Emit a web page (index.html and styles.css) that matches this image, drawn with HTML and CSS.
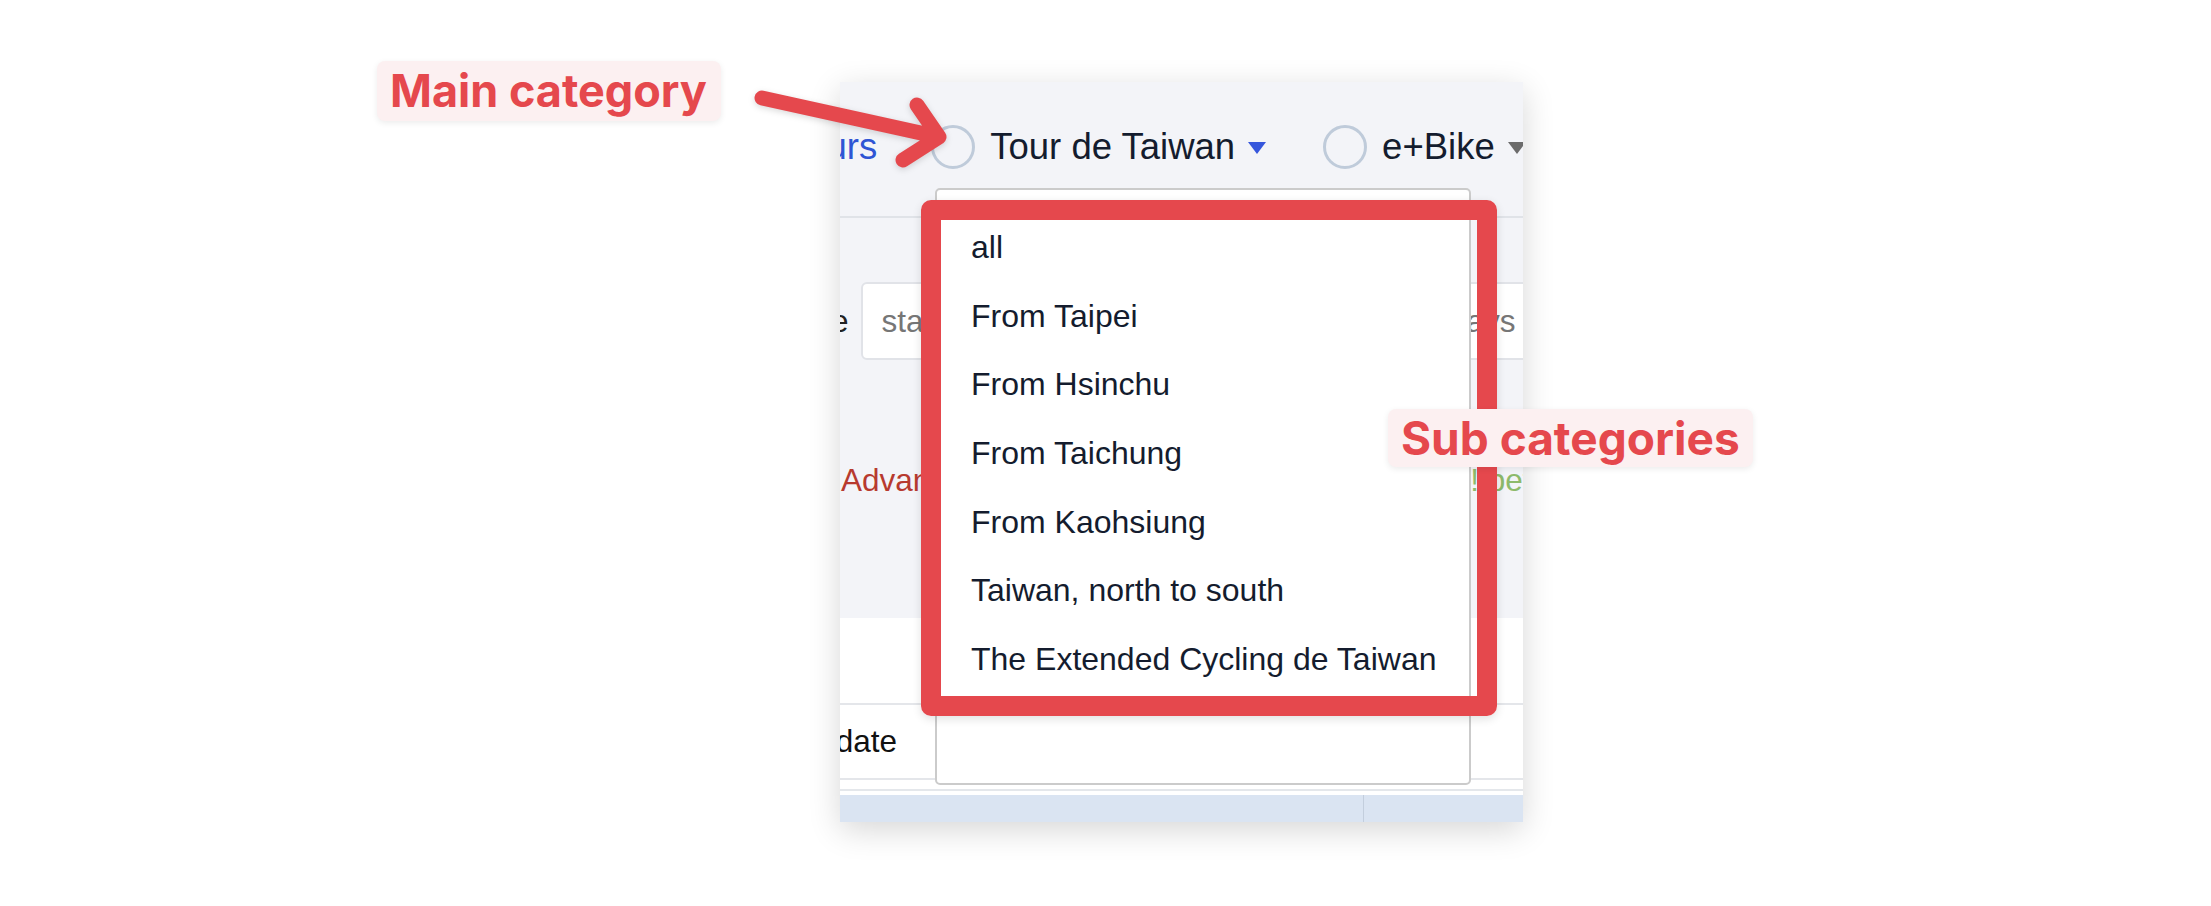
FILE: index.html
```html
<!DOCTYPE html>
<html lang="en">
<head>
    <meta charset="UTF-8">
    <meta name="viewport" content="width=device-width, initial-scale=1.0">
    <title>Category filter</title>
    <link rel="stylesheet" href="styles.css">
</head>
<body>
    <div class="stage">
        <div class="panel">
            <div class="panel-top">
                <nav class="cat-nav">
                    <a href="#" class="nav-link">Tours</a>
                    <div class="cat">
                        <span class="radio"></span>
                        <span class="cat-name">Tour de Taiwan</span>
                        <span class="caret caret-blue"></span>
                    </div>
                    <div class="cat">
                        <span class="radio"></span>
                        <span class="cat-name">e+Bike</span>
                        <span class="caret"></span>
                    </div>
                </nav>

                <div class="search-row">
                    <label class="search-label">Date</label>
                    <input type="text" class="field field-start" placeholder="start date">
                    <input type="text" class="field field-days" placeholder="days">
                </div>

                <div class="adv-row">
                    <a href="#" class="adv-link">Advanced search</a>
                    <span class="beta">New! beta</span>
                </div>
            </div>

            <div class="table-row">
                <div class="cell-label">Start date</div>
            </div>

            <div class="footer-bar">
                <div class="strip"><span class="strip-sep"></span></div>
            </div>

            <!-- open dropdown of the main category -->
            <div class="dropdown">
                <ul class="sub-list">
                    <li>all</li>
                    <li>From Taipei</li>
                    <li>From Hsinchu</li>
                    <li>From Taichung</li>
                    <li>From Kaohsiung</li>
                    <li>Taiwan, north to south</li>
                    <li>The Extended Cycling de Taiwan</li>
                </ul>
            </div>
        </div>

        <!-- annotations -->
        <div class="note note-main">Main category</div>
        <svg class="arrow" width="220" height="100" viewBox="0 0 220 100">
            <path d="M22 18 L199 57 M177 25 L199 57 L163 80" fill="none" stroke="#e5484d" stroke-width="15" stroke-linecap="round" stroke-linejoin="round"/>
        </svg>
        <div class="highlight"></div>
        <div class="note note-sub">Sub categories</div>
    </div>
</body>
</html>
```

FILE: styles.css
```css
:root {
    --note-red: #e5484d;
    --note-bg: #fcf0f1;
    --panel-gray: #f3f4f8;
    --text-dark: #141c2e;
}

* {
    margin: 0;
    padding: 0;
    box-sizing: border-box;
}

body {
    background-color: #fff;
    font-family: 'Liberation Sans', Arial, sans-serif;
    width: 2211px;
    height: 906px;
    overflow: hidden;
}

.stage {
    position: relative;
    height: 906px;
    padding: 82px 0 0 840px;
}

.panel {
    position: relative;
    width: 683px;
    height: 740px;
    background-color: #fff;
    overflow: hidden;
    box-shadow: 0 8px 30px rgba(0, 0, 0, 0.16);
}

.panel-top {
    height: 536px;
    background-color: var(--panel-gray);
}

/* main category nav */
.cat-nav {
    display: flex;
    align-items: center;
    height: 136px;
    padding-bottom: 5px;
    border-bottom: 2px solid #e0e3e8;
    white-space: nowrap;
}

.nav-link {
    flex-shrink: 0;
    margin-left: -52px;
    margin-right: 54px;
    color: #2f55d4;
    font-size: 36.5px;
    text-decoration: none;
}

.cat {
    display: flex;
    flex-shrink: 0;
    align-items: center;
    margin-right: 57px;
}

.radio {
    flex-shrink: 0;
    width: 44px;
    height: 44px;
    border: 3.5px solid #bfcbda;
    border-radius: 50%;
    margin-right: 15px;
}

.cat-name {
    font-size: 36.5px;
    color: var(--text-dark);
    margin-right: 13px;
}

.caret {
    flex-shrink: 0;
    width: 0;
    height: 0;
    border-left: 9px solid transparent;
    border-right: 9px solid transparent;
    border-top: 12px solid #6b6b6b;
    margin-top: 3px;
}

.caret-blue {
    border-top-color: #3556dc;
}

/* search row */
.search-row {
    display: flex;
    align-items: center;
    margin-top: 64px;
    height: 78px;
}

.search-label {
    flex-shrink: 0;
    margin-left: -58px;
    margin-right: 12px;
    font-size: 31.5px;
    color: #222;
}

.field {
    flex-shrink: 0;
    height: 78px;
    border: 2px solid #e1e3e8;
    border-radius: 6px;
    background-color: #fff;
    font-family: 'Liberation Sans', Arial, sans-serif;
    font-size: 31.5px;
    color: #222;
}

.field::placeholder {
    color: #767676;
}

.field-start {
    width: 300px;
    padding-left: 19px;
}

.field-days {
    width: 380px;
    margin-left: 18px;
    padding-right: 41px;
    text-align: right;
}

/* advanced row */
.adv-row {
    display: flex;
    justify-content: space-between;
    align-items: center;
    margin-top: 100px;
    height: 40px;
    font-size: 31.5px;
    white-space: nowrap;
}

.adv-link {
    margin-left: 1px;
    color: #b73a2f;
    text-decoration: none;
}

.beta {
    margin-right: -26px;
    color: #8dba6b;
}

/* table */
.table-row {
    display: flex;
    margin-top: 85px;
    height: 77px;
    border-top: 2px solid #e4e6ea;
    border-bottom: 2px solid #e4e6ea;
}

.cell-label {
    width: 95px;
    padding-right: 38px;
    text-align: right;
    white-space: nowrap;
    direction: rtl;
    overflow: hidden;
    font-size: 31.5px;
    line-height: 73px;
    color: #111;
}

.footer-bar {
    margin-top: 9px;
    border-top: 2px solid #e4e7eb;
    padding-top: 4px;
}

.strip {
    display: flex;
    height: 27px;
    background-color: #dae4f2;
    padding-left: 523px;
}

.strip-sep {
    width: 1px;
    background-color: #c3cedd;
}

/* dropdown list */
.dropdown {
    position: absolute;
    left: 95px;
    top: 106px;
    width: 536px;
    height: 597px;
    background-color: #fff;
    border: 2px solid #cbcbcb;
    border-radius: 5px;
}

.sub-list {
    list-style: none;
    padding-top: 23px;
}

.sub-list li {
    height: 68.7px;
    line-height: 68.7px;
    padding-left: 34px;
    font-size: 32px;
    color: var(--text-dark);
    white-space: nowrap;
}

/* annotations */
.note {
    position: absolute;
    background-color: var(--note-bg);
    color: var(--note-red);
    font-family: Inter, 'Open Sans', sans-serif;
    font-weight: 700;
    font-size: 46px;
    line-height: 58px;
    border-radius: 8px;
    box-shadow: 0 2px 6px rgba(0, 0, 0, 0.08);
    white-space: nowrap;
}

.note-main {
    left: 377px;
    top: 61px;
    font-size: 45px;
    padding: 1px 14px 1px 13px;
}

.note-sub {
    left: 1388px;
    top: 409px;
    padding: 0 13px;
}

.arrow {
    position: absolute;
    left: 740px;
    top: 80px;
    filter: drop-shadow(0 2px 3px rgba(0, 0, 0, 0.15));
}

.highlight {
    position: absolute;
    left: 921px;
    top: 200px;
    width: 576px;
    height: 516px;
    border: 20px solid var(--note-red);
    border-radius: 10px;
    box-shadow: 0 3px 10px rgba(0, 0, 0, 0.12);
}
```
